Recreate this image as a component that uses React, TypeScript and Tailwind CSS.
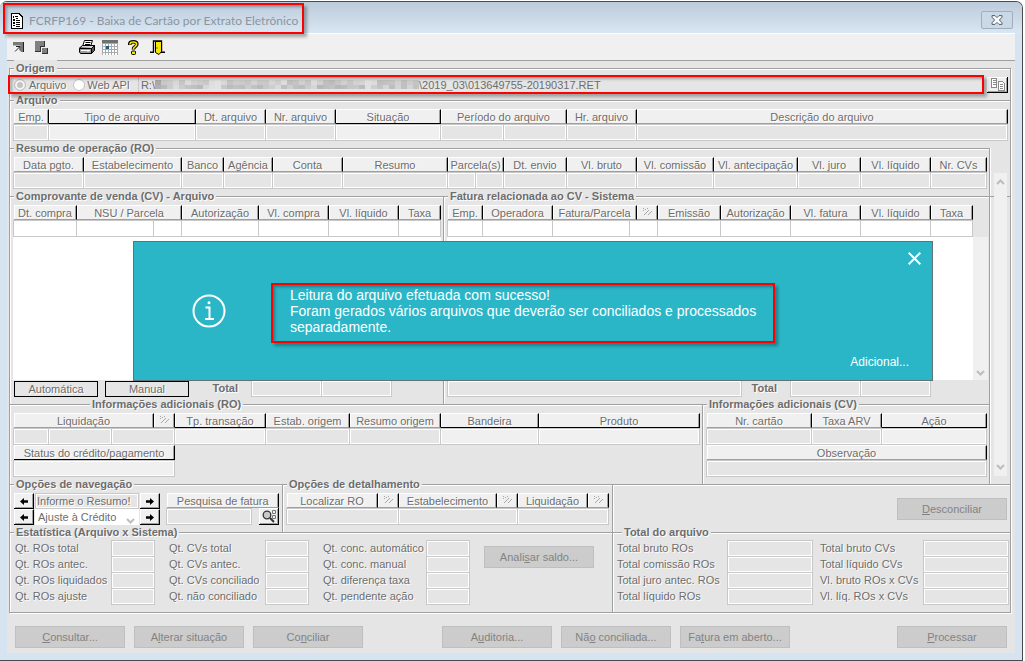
import React from 'react';
import clsx from 'clsx';

type HeadCell = string | { label: string; active?: boolean };

interface SectionTitleProps {
  children: React.ReactNode;
  lead?: string;
}

const embossed = '[text-shadow:1px_1px_0_#fff]';

const Line: React.FC<{ className?: string }> = ({ className }) => (
  <span className={clsx('mt-[2px] h-[2px] border-t border-[#a0a0a0] bg-white', className)} />
);

const SectionTitle: React.FC<SectionTitleProps> = ({ children, lead = 'w-[4px]' }) => (
  <div className="flex h-4 items-center">
    <Line className={lead} />
    <h2 className={clsx('px-[2px] text-[11px] leading-4 font-bold whitespace-nowrap', embossed)}>{children}</h2>
    <Line className="flex-1" />
  </div>
);

const FilterIcon = () => (
  <svg width="11" height="9" viewBox="0 0 11 9" className="mx-auto" shapeRendering="crispEdges">
    <path
      d="M1 0h1v1H1zM3 1h1v1H3zM5 0h1v1H5zM1 2h1v1H1zM6 2h1v1H6zM5 3h1v1H5zM4 4h1v1H4zM3 5h1v1H3zM2 6h1v1H2zM9 3h1v1H9zM8 4h1v1H8zM7 5h1v1H7zM6 6h1v1H6z"
      fill="#a8a8a8"
    />
  </svg>
);

const HeadRow: React.FC<{ cols: string; cells: HeadCell[] }> = ({ cols, cells }) => (
  <div className={clsx('grid h-4', cols)}>
    {cells.map((cell, i) => {
      const label = typeof cell === 'string' ? cell : cell.label;
      const active = typeof cell !== 'string' && cell.active;
      return (
        <button
          key={i}
          type="button"
          aria-label={label || 'Filtrar'}
          className={clsx(
            'mt-px h-[15px] min-w-0 overflow-hidden border-t border-r border-b border-t-white border-r-black bg-[#f0f0f0] text-center leading-[14px] whitespace-nowrap shadow-[inset_1px_0_0_#fff,inset_-1px_0_0_#a0a0a0]',
            active ? 'border-b-black' : 'border-b-[#a0a0a0]',
            embossed,
          )}
        >
          {label || <FilterIcon />}
        </button>
      );
    })}
  </div>
);

interface FieldProps {
  label: string;
  tone?: 'off' | 'on' | 'white';
  className?: string;
}

const Field: React.FC<FieldProps> = ({ label, tone = 'off', className }) => (
  <input
    readOnly
    aria-label={label}
    className={clsx(
      '-ml-px h-[17px] min-w-0 border border-[#c8c8c8] shadow-[inset_0_0_0_1px_#fff]',
      tone === 'off' && 'bg-[#e5e5e5]',
      tone === 'on' && 'bg-[#f0f0f0]',
      tone === 'white' && 'bg-white',
      className,
    )}
  />
);

const FieldRow: React.FC<{ cols: string; names: string[]; on?: number[]; tone?: 'off' | 'white' }> = ({
  cols,
  names,
  on = [],
  tone = 'off',
}) => (
  <div className={clsx('grid h-4', cols)}>
    {names.map((name, i) => (
      <Field key={i} label={name} tone={on.includes(i) ? 'on' : tone} />
    ))}
  </div>
);

const ActionButton: React.FC<{ text: [string, string, string] }> = ({ text }) => (
  <button type="button" className="h-[22px] w-[110px] border border-[#bfbfbf] bg-[#cccccc] text-[#838383]">
    {text[0]}
    <u className="underline-offset-1">{text[1]}</u>
    {text[2]}
  </button>
);

const ArrowButton: React.FC<{ dir: 'left' | 'right'; label: string }> = ({ dir, label }) => (
  <button
    type="button"
    aria-label={label}
    className="flex h-4 items-center justify-center border-t border-r border-b border-t-white border-r-black border-b-black bg-[#f0f0f0] shadow-[inset_1px_0_0_#fff,inset_-1px_-1px_0_#a0a0a0]"
  >
    <svg width="8" height="7" viewBox="0 0 8 7" className={dir === 'right' ? 'rotate-180' : ''}>
      <path d="M0 3.500L4 0v2.200h4v2.600H4V7z" fill="#000" />
    </svg>
  </button>
);

const StatRows: React.FC<{ cols: string; rows: string[] }> = ({ cols, rows }) => (
  <div className={clsx('grid auto-rows-[16px]', cols)}>
    {rows.map((row) => (
      <React.Fragment key={row}>
        <span className={clsx('leading-4 whitespace-nowrap', embossed)}>{row}</span>
        <Field label={row} className="ml-0 w-full" />
      </React.Fragment>
    ))}
  </div>
);

const Chevron: React.FC<{ up?: boolean }> = ({ up }) => (
  <svg width="9" height="6" viewBox="0 0 9 6" className={up ? 'rotate-180' : ''}>
    <path d="M1 1l3.500 3.500L8 1" fill="none" stroke="#bdbdbd" strokeWidth="2" />
  </svg>
);

// shades of the masked folder name, two rows of blocks
const maskTop = ['a8', 'c8', 'cc', 'd8', 'c6', 'dc', 'd0', 'cc', 'c8', 'de', 'e2', 'd8', 'c4', 'cc', 'ca', 'c6', 'd2', 'c8', 'c8', 'd6', 'ce', 'dd', 'c0', 'c4', 'd0', 'c6', 'dc', 'd0', 'c0', 'bc', 'c6', 'd0', 'c6', 'd2', 'd4', 'e0', 'dc', 'c0', 'c2', 'c4', 'd0', 'c0', 'cc', 'c4'];
const maskBottom = ['b0', 'ba', 'cc', 'dc', 'cc', 'c4', 'c0', 'ba', 'd8', 'e0', 'e2', 'c8', 'bc', 'c2', 'be', 'cc', 'c2', 'ba', 'c8', 'ce', 'da', 'c0', 'ce', 'c0', 'bc', 'cc', 'd6', 'b8', 'be', 'c2', 'b8', 'bc', 'c6', 'c8', 'bc', 'e0', 'ce', 'c4', 'd6', 'be', 'd4', 'c0', 'd4', 'c2'];

const MaskedText = () => (
  <svg width="264" height="10" viewBox="0 0 264 10" shapeRendering="crispEdges" aria-hidden="true">
    {maskTop.map((c, i) => (
      <rect key={i} x={i * 6} y="0" width="6" height="5" fill={`#${c}${c}${c}`} />
    ))}
    {maskBottom.map((c, i) => (
      <rect key={i} x={i * 6} y="5" width="6" height="4" fill={`#${c}${c}${c}`} />
    ))}
  </svg>
);

const Highlight: React.FC<{ className: string }> = ({ className }) => (
  <div
    className={clsx(
      'pointer-events-none absolute z-20 border-2 border-[#fe0000] shadow-[3px_3px_3px_rgba(0,0,0,0.3),inset_2px_2px_3px_rgba(0,0,0,0.3)]',
      className,
    )}
  />
);

const TitleBar = () => (
  <header className="relative flex h-[31px] items-center justify-between rounded-t-[6px] bg-linear-to-b from-[#bccbdb] to-[#d9e6f3] pr-[9px] pl-[10px]">
    <div className="flex items-center gap-[6px] pt-[6px]">
      <svg width="13" height="16" viewBox="0 0 13 16" shapeRendering="crispEdges">
        <path d="M1 .5h8l3.500 3.500v11.500H1z" fill="#fff" stroke="#000" />
        <path d="M3 3h1v2H3zM3 6h2v2H3zM3 9h2v2H3zM3 12h2v1H3zM5 3h3v1H5zM6 5h2v1H6zM6 7h4v1H6zM6 9h4v1H6zM6 11h4v1H6zM6 13h4v1H6z" fill="#000" />
      </svg>
      <h1 className="font-[Lato,'Noto_Sans',sans-serif] text-[12px] leading-4 text-[#8c959f]">
        FCRFP169 - Baixa de Cartão por Extrato Eletrônico
      </h1>
    </div>
    <button
      type="button"
      aria-label="Fechar"
      className="mt-[5px] flex h-[18px] w-8 items-center justify-center rounded-[2px] border border-[#9fadbe] bg-[#cbd9e7]"
    >
      <svg width="12" height="10" viewBox="0 0 12 10">
        <path d="M1 .6h3L6 2.600l2-2h3v1.600L8.400 5 11 7.800v1.600H8l-2-2-2 2H1V7.800L3.600 5 1 2.200z" fill="#f6f8fa" stroke="#55606c" strokeWidth="1" />
      </svg>
    </button>
    <Highlight className="top-px left-[3px] h-[31px] w-[301px]" />
  </header>
);

const toolButton = 'flex h-4 w-4 items-center justify-center';

const Toolbar = () => (
  <nav className="flex h-7 items-center border-t border-b border-t-white border-b-[#a0a0a0] bg-[#f0f0f0] pl-[4px]">
    <button type="button" aria-label="Minimizar" className={toolButton}>
      <svg width="12" height="12" viewBox="0 0 12 12">
        <path d="M0 1h11v10H8L0 4z" fill="#7a7a7a" />
        <path d="M10.500 1v10" stroke="#222" />
        <path d="M1 4.500h6.500V11H1z" fill="#f4f4f4" />
        <path d="M3 5.500h4v4M7 5.500l-5 5" fill="none" stroke="#222" strokeWidth="1" />
      </svg>
    </button>
    <button type="button" aria-label="Janelas" className={clsx(toolButton, 'ml-[6px]')}>
      <svg width="15" height="13" viewBox="0 0 15 13" shapeRendering="crispEdges">
        <path d="M1 0h10v6H7v5H1z" fill="#808080" />
        <path d="M10 0h1v6H7v5H1v-1h5V5h4z" fill="#333" />
        <path d="M8 7h6v6H8z" fill="#808080" />
        <path d="M13 7h1v6H8v-1h5z" fill="#333" />
      </svg>
    </button>
    <button type="button" aria-label="Imprimir" className={clsx(toolButton, 'ml-[30px]')}>
      <svg width="16" height="15" viewBox="0 0 16 15">
        <path d="M5.500 .5h8l-2 6h-8z" fill="#fff" stroke="#000" />
        <path d="M6.500 2.500h5M6 4.500h5" stroke="#000" />
        <path d="M.5 8l3-2.500h12l-3 3z" fill="#d8d8d8" stroke="#000" />
        <path d="M.5 8.500h12v5h-11l-1-1.500z" fill="#9a9a9a" stroke="#000" />
        <path d="M12.500 8.500l3-3v5l-3 3z" fill="#555" stroke="#000" />
        <path d="M2 10.500h9" stroke="#fff" />
        <path d="M8 11h2v1H8z" fill="#e8e000" />
      </svg>
    </button>
    <button type="button" aria-label="Calendário" className={clsx(toolButton, 'ml-[7px]')}>
      <svg width="16" height="15" viewBox="0 0 16 15" shapeRendering="crispEdges">
        <path d="M0 0h16v15H0z" fill="#a8a8a8" />
        <path d="M0 0h16v3H0z" fill="#707070" />
        {[4, 7, 10, 13].map((y) =>
          [1, 4, 7, 10, 13].map((x) => <rect key={`${x}-${y}`} x={x} y={y} width="2" height="2" fill="#fff" />),
        )}
        <rect x="4" y="6" width="3" height="3" fill="#15608f" />
      </svg>
    </button>
    <button type="button" aria-label="Ajuda" className={clsx(toolButton, 'ml-[7px]')}>
      <svg width="11" height="15" viewBox="0 0 11 15">
        <path d="M1.800 5V3.600Q2.200 1.800 5.400 1.800 8.800 1.800 8.800 4.200 8.800 5.600 7 6.800 5.400 7.800 5.400 9.600" fill="none" stroke="#000" strokeWidth="3.600" />
        <path d="M2 4.600V3.800Q2.400 2 5.400 2 8.600 2 8.600 4.200 8.600 5.400 7 6.600 5.400 7.600 5.400 9.200" fill="none" stroke="#f7e600" strokeWidth="1.700" />
        <rect x="3.500" y="11" width="4" height="3.500" rx="1" fill="#f7e600" stroke="#000" />
      </svg>
    </button>
    <button type="button" aria-label="Sair" className={clsx(toolButton, 'ml-[8px]')}>
      <svg width="15" height="15" viewBox="0 0 15 15">
        <path d="M3.500 12V1h8v11" fill="#fff" stroke="#000" strokeWidth="1.400" />
        <path d="M0 12.300h4M11 12.300h4" stroke="#000" strokeWidth="1.400" />
        <path d="M5.500 1.500h6v10l-2.500 3-3.500-2z" fill="#f7e600" stroke="#000" />
        <path d="M6.500 8h1" stroke="#000" />
      </svg>
    </button>
  </nav>
);

const OrigemRow = () => (
  <div className="relative -mb-[2px] flex h-[18px] items-center pr-[2px] pl-[4px]">
    <label className="flex items-center gap-[3px]">
      <input
        type="radio"
        name="origem"
        defaultChecked
        className="h-3 w-3 appearance-none rounded-full border border-[#c4c4c4] bg-[#c4c4c4] shadow-[inset_0_0_0_2px_#f4f4f4]"
      />
      <span className={embossed}>Arquivo</span>
    </label>
    <label className="ml-[7px] flex items-center gap-[2px]">
      <input type="radio" name="origem" className="h-3 w-3 appearance-none rounded-full border border-[#c4c4c4] bg-white" />
      <span className={embossed}>Web API</span>
    </label>
    <div className="ml-[8px] flex h-4 flex-1 items-center border-l border-[#c8c8c8] pl-[2px] text-[#6d6d6d]">
      <span>R:\</span>
      <MaskedText />
      <span>\2019_03\013649755-20190317.RET</span>
    </div>
    <button
      type="button"
      aria-label="Copiar"
      className="flex h-4 w-[21px] items-center justify-center border-r border-b border-black bg-[#f0f0f0] shadow-[inset_1px_1px_0_#fff,inset_-1px_-1px_0_#a0a0a0]"
    >
      <svg width="15" height="13" viewBox="0 0 15 13" shapeRendering="crispEdges" fill="#fff" stroke="#8a8a8a">
        <path d="M1.500 .5h5v9h-5zM8.500 3.500h4l2 2v7h-6z" />
        <path d="M3 2.500h3M3 4.500h3M3 6.500h3M10 6.500h3M10 8.500h3M10 10.500h3" />
      </svg>
    </button>
    <Highlight className="top-[-1px] -left-[2px] right-[26px] h-[19px]" />
  </div>
);

const Toast = () => (
  <div
    role="dialog"
    className="absolute top-[53px] right-[56px] left-[123px] z-10 flex h-[140px] items-center border border-[#5f7377] bg-[#2ab6c7] text-[12px] leading-4 text-white"
  >
    <svg width="36" height="36" viewBox="0 0 36 36" fill="none" stroke="#fff" strokeWidth="2" className="ml-[57px]">
      <circle cx="18" cy="18" r="15.500" />
      <path d="M14.500 14.500h4v11M14 26h9" />
      <circle cx="18" cy="9.800" r="1.500" fill="#fff" stroke="none" />
    </svg>
    <div className="relative mt-1 ml-[44px] h-[60px] w-[504px] pt-[4px] pl-[19px] text-[14px] leading-4">
      <p>Leitura do arquivo efetuada com sucesso!</p>
      <p>Foram gerados vários arquivos que deverão ser conciliados e processados separadamente.</p>
      <Highlight className="inset-0" />
    </div>
    <button type="button" aria-label="Fechar aviso" className="absolute top-[10px] right-[11px]">
      <svg width="13" height="13" viewBox="0 0 13 13" stroke="#fff" strokeWidth="2">
        <path d="M.7.7l11.600 11.600M12.300.7L.7 12.300" />
      </svg>
    </button>
    <a href="#adicional" className="absolute right-[23px] bottom-[10px]">
      Adicional...
    </a>
  </div>
);

const arquivoCols = 'grid-cols-[35fr_147fr_70fr_70fr_105fr_126fr_70fr_371fr]';
const arquivoFields = 'grid-cols-[35fr_147fr_70fr_70fr_105fr_63fr_63fr_70fr_371fr]';
const roCols = 'grid-cols-[70fr_98fr_42fr_49fr_70fr_105fr_56fr_63fr_70fr_77fr_84fr_63fr_70fr_56fr]';
const roFields = 'grid-cols-[70fr_98fr_42fr_49fr_70fr_105fr_28fr_28fr_63fr_70fr_77fr_84fr_63fr_70fr_56fr]';

const panel = 'mt-2 -mb-2 min-w-0 border-r border-[#a0a0a0] pb-2 shadow-[1px_0_0_#fff]';

const Vendas = () => (
  <div className="relative grid grid-cols-[434fr_545fr]">
    <section className={panel}>
      <div className="-mt-2">
        <SectionTitle>Comprovante de venda (CV) - Arquivo</SectionTitle>
      </div>
      <div className="pr-[2px] pl-[4px]">
        <HeadRow
          cols="grid-cols-[63fr_105fr_77fr_70fr_70fr_42fr]"
          cells={['Dt. compra', 'NSU / Parcela', 'Autorização', 'Vl. compra', 'Vl. líquido', 'Taxa']}
        />
        <FieldRow
          cols="grid-cols-[63fr_77fr_28fr_77fr_70fr_70fr_42fr]"
          names={['Dt. compra', 'NSU', 'Parcela', 'Autorização', 'Vl. compra', 'Vl. líquido', 'Taxa']}
          tone="white"
        />
        <div className="mt-px -ml-px h-[143px] bg-white" />
        <div className="grid h-4 grid-cols-[84fr_7fr_84fr_63fr_70fr_70fr_49fr]">
          <button type="button" className={clsx('mt-px h-4 border border-black leading-[14px]', embossed)}>
            Automática
          </button>
          <span />
          <button type="button" className={clsx('mt-px h-4 border border-black leading-[14px]', embossed)}>
            Manual
          </button>
          <span className={clsx('pr-[14px] text-right leading-4 font-bold', embossed)}>Total</span>
          <Field label="Total compra" />
          <Field label="Total líquido" />
        </div>
      </div>
    </section>
    <section className="min-w-0">
      <SectionTitle>Fatura relacionada ao CV - Sistema</SectionTitle>
      <div className="flex pl-[4px]">
        <div className="min-w-0 flex-1">
          <HeadRow
            cols="grid-cols-[35fr_70fr_84fr_21fr_63fr_70fr_70fr_70fr_42fr]"
            cells={['Emp.', 'Operadora', 'Fatura/Parcela', '', 'Emissão', 'Autorização', 'Vl. fatura', 'Vl. líquido', 'Taxa']}
          />
          <FieldRow
            cols="grid-cols-[35fr_70fr_77fr_28fr_63fr_70fr_70fr_70fr_42fr]"
            names={['Emp.', 'Operadora', 'Fatura', 'Parcela', 'Emissão', 'Autorização', 'Vl. fatura', 'Vl. líquido', 'Taxa']}
            tone="white"
          />
          <div className="mt-px -ml-px h-[143px] bg-white" />
        </div>
        <div className="flex w-4 flex-col pt-[33px] pr-px">
          <div className="flex flex-1 items-end justify-center bg-[#f0f0f0] pb-1">
            <Chevron />
          </div>
        </div>
      </div>
      <div className="grid h-4 grid-cols-[294fr_49fr_70fr_70fr_58fr] pl-[4px]">
        <Field label="Descrição da fatura" />
        <span className={clsx('pr-[14px] text-right leading-4 font-bold', embossed)}>Total</span>
        <Field label="Total fatura" />
        <Field label="Total líquido" />
      </div>
    </section>
    <Toast />
  </div>
);

const Informacoes = () => (
  <div className="grid grid-cols-[693fr_286fr]">
    <section className={panel}>
      <div className="-mt-2">
        <SectionTitle lead="w-[80px]">Informações adicionais (RO)</SectionTitle>
      </div>
      <div className="pr-[2px] pl-[4px]">
        <HeadRow
          cols="grid-cols-[140fr_21fr_91fr_84fr_91fr_98fr_161fr]"
          cells={[
            'Liquidação',
            '',
            { label: 'Tp. transação', active: true },
            'Estab. origem',
            'Resumo origem',
            { label: 'Bandeira', active: true },
            { label: 'Produto', active: true },
          ]}
        />
        <FieldRow
          cols="grid-cols-[35fr_63fr_63fr_91fr_84fr_91fr_98fr_161fr]"
          names={['Banco', 'Agência', 'Conta', 'Tp. transação', 'Estab. origem', 'Resumo origem', 'Bandeira', 'Produto']}
          on={[3, 6, 7]}
        />
        <div className="w-[161px]">
          <HeadRow cols="grid-cols-1" cells={[{ label: 'Status do crédito/pagamento', active: true }]} />
          <FieldRow cols="grid-cols-1" names={['Status do crédito/pagamento']} on={[0]} />
        </div>
      </div>
    </section>
    <section className="min-w-0">
      <SectionTitle>Informações adicionais (CV)</SectionTitle>
      <div className="pr-[2px] pl-[4px]">
        <HeadRow cols="grid-cols-[105fr_70fr_105fr]" cells={['Nr. cartão', 'Taxa ARV', { label: 'Ação', active: true }]} />
        <FieldRow cols="grid-cols-[105fr_70fr_105fr]" names={['Nr. cartão', 'Taxa ARV', 'Ação']} on={[2]} />
        <HeadRow cols="grid-cols-1" cells={['Observação']} />
        <FieldRow cols="grid-cols-1" names={['Observação']} />
      </div>
    </section>
  </div>
);

const Navegacao = () => (
  <section className={panel}>
    <div className="-mt-2">
      <SectionTitle>Opções de navegação</SectionTitle>
    </div>
    <div className="grid h-8 grid-cols-[147fr_112fr] items-start gap-x-[7px] pr-[3px] pl-[4px]">
      <div className="grid grid-cols-[20px_1fr_20px] gap-x-px pt-px">
        <ArrowButton dir="left" label="Resumo anterior" />
        <input
          aria-label="Resumo"
          defaultValue="Informe o Resumo!"
          className={clsx('h-4 min-w-0 border border-[#c8c8c8] bg-[#e5e5e5] pl-px shadow-[inset_0_0_0_1px_#fff]', embossed)}
        />
        <ArrowButton dir="right" label="Próximo resumo" />
        <ArrowButton dir="left" label="Ajuste anterior" />
        <div className="relative flex items-center">
          <select aria-label="Tipo de ajuste" className="h-4 w-full appearance-none bg-white pl-[3px] leading-4">
            <option>Ajuste à Crédito</option>
          </select>
          <span className="pointer-events-none absolute right-[4px] bottom-px">
            <Chevron />
          </span>
        </div>
        <ArrowButton dir="right" label="Próximo ajuste" />
      </div>
      <div>
        <HeadRow cols="grid-cols-1" cells={['Pesquisa de fatura']} />
        <div className="flex h-4 justify-between">
          <Field label="Pesquisa de fatura" className="w-[86px]" />
          <button
            type="button"
            aria-label="Pesquisar"
            className="flex h-[17px] w-[20px] items-center justify-center border-r border-b border-black bg-[#f0f0f0] shadow-[inset_1px_1px_0_#fff,inset_-1px_-1px_0_#a0a0a0]"
          >
            <svg width="14" height="13" viewBox="0 0 14 13" fill="none">
              <circle cx="5" cy="5" r="3.800" fill="#c9c9c9" stroke="#333" strokeWidth="1.300" />
              <path d="M8 8l4 4" stroke="#333" strokeWidth="2" />
              <path d="M10.500 .5h3v3h-3zM10.500 5.500h3v3h-3z" stroke="#777" />
            </svg>
          </button>
        </div>
      </div>
    </div>
  </section>
);

const Estatistica = () => (
  <div>
    <SectionTitle>Estatística (Arquivo x Sistema)</SectionTitle>
    <div className="flex items-start pl-[5px]">
      <StatRows cols="w-[140px] grid-cols-[1fr_44px]" rows={['Qt. ROs total', 'Qt. ROs antec.', 'Qt. ROs liquidados', 'Qt. ROs ajuste']} />
      <div className="ml-[14px]">
        <StatRows cols="w-[140px] grid-cols-[1fr_44px]" rows={['Qt. CVs total', 'Qt. CVs antec.', 'Qt. CVs conciliado', 'Qt. não conciliado']} />
      </div>
      <div className="ml-[14px]">
        <StatRows
          cols="w-[147px] grid-cols-[1fr_44px]"
          rows={['Qt. conc. automático', 'Qt. conc. manual', 'Qt. diferença taxa', 'Qt. pendente ação']}
        />
      </div>
      <div className="mt-[6px] ml-[14px]">
        <ActionButton text={['Anali', 's', 'ar saldo...']} />
      </div>
    </div>
  </div>
);

const App: React.FC = () => {
  return (
    <div className="bg-white pt-px pr-[2px] font-['Liberation_Sans',Arial,sans-serif] text-[11px] text-[#6d6d6d]">
      <div className="rounded-t-[7px] border-t border-r border-b border-[#4a4a50] bg-[#d6e4f2] pb-[7px]">
        <TitleBar />
        <main className="mx-[7px] bg-[#e5e5e5]">
          <Toolbar />
          <div className="mt-[7px] mr-[4px] ml-[2px] border border-[#a0a0a0] pb-2 shadow-[1px_1px_0_#fff,inset_1px_0_0_#fff]">
            <div className="-mt-[9px] [&_h2]:bg-[#e5e5e5]">
              <SectionTitle>Origem</SectionTitle>
            </div>
            <OrigemRow />

            <SectionTitle>Arquivo</SectionTitle>
            <div className="pr-[2px] pl-[4px]">
              <HeadRow
                cols={arquivoCols}
                cells={[
                  'Emp.',
                  { label: 'Tipo de arquivo', active: true },
                  'Dt. arquivo',
                  'Nr. arquivo',
                  { label: 'Situação', active: true },
                  'Período do arquivo',
                  'Hr. arquivo',
                  'Descrição do arquivo',
                ]}
              />
              <FieldRow
                cols={arquivoFields}
                names={['Emp.', 'Tipo', 'Dt. arquivo', 'Nr. arquivo', 'Situação', 'Período inicial', 'Período final', 'Hr. arquivo', 'Descrição']}
                on={[1, 4]}
              />
            </div>

            <div className="flex">
              <div className={clsx(panel, 'flex-1')}>
                <div className="-mt-2">
                  <SectionTitle>Resumo de operação (RO)</SectionTitle>
                </div>
                <div className="pr-[2px] pl-[4px]">
                  <HeadRow
                    cols={roCols}
                    cells={[
                      'Data pgto.',
                      'Estabelecimento',
                      'Banco',
                      'Agência',
                      'Conta',
                      'Resumo',
                      'Parcela(s)',
                      'Dt. envio',
                      'Vl. bruto',
                      'Vl. comissão',
                      'Vl. antecipação',
                      'Vl. juro',
                      'Vl. líquido',
                      'Nr. CVs',
                    ]}
                  />
                  <FieldRow
                    cols={roFields}
                    names={[
                      'Data pgto.',
                      'Estabelecimento',
                      'Banco',
                      'Agência',
                      'Conta',
                      'Resumo',
                      'Parcela',
                      'Parcelas',
                      'Dt. envio',
                      'Vl. bruto',
                      'Vl. comissão',
                      'Vl. antecipação',
                      'Vl. juro',
                      'Vl. líquido',
                      'Nr. CVs',
                    ]}
                  />
                </div>
                <Vendas />
                <Informacoes />
              </div>
              <div className="flex w-5">
                <div className="mt-[56px] w-1 self-start border-t border-[#a0a0a0]" />
                <div className="mt-[33px] flex flex-1 flex-col items-center justify-between bg-[#f0f0f0] py-[6px]">
                  <Chevron up />
                  <Chevron />
                </div>
                <div className="mt-[56px] w-[3px] self-start border-t border-[#a0a0a0]" />
              </div>
            </div>

            <div className="flex">
              <div className={clsx(panel, 'w-[603px]')}>
                <div className="-mt-2 grid grid-cols-[273fr_329fr]">
                  <Navegacao />
                  <section className="min-w-0">
                    <SectionTitle>Opções de detalhamento</SectionTitle>
                    <div className="pr-[3px] pl-[4px]">
                      <HeadRow
                        cols="grid-cols-[91fr_21fr_98fr_21fr_70fr_21fr]"
                        cells={['Localizar RO', '', 'Estabelecimento', '', 'Liquidação', '']}
                      />
                      <FieldRow cols="grid-cols-[112fr_119fr_91fr]" names={['Localizar RO', 'Estabelecimento', 'Liquidação']} />
                    </div>
                  </section>
                </div>
                <Estatistica />
              </div>
              <div className="min-w-0 flex-1">
                <div className="flex h-12 flex-col items-end pt-2">
                  <div className="h-[2px] w-full border-t border-[#a0a0a0] bg-white" />
                  <div className="mt-[12px] pr-[3px]">
                    <ActionButton text={['', 'D', 'esconciliar']} />
                  </div>
                </div>
                <SectionTitle lead="w-[9px]">Total do arquivo</SectionTitle>
                <div className="flex justify-between pr-px pl-[4px]">
                  <StatRows
                    cols="w-[196px] grid-cols-[1fr_86px]"
                    rows={['Total bruto ROs', 'Total comissão ROs', 'Total juro antec. ROs', 'Total líquido ROs']}
                  />
                  <StatRows
                    cols="w-[189px] grid-cols-[1fr_86px]"
                    rows={['Total bruto CVs', 'Total líquido CVs', 'Vl. bruto ROs x CVs', 'Vl. líq. ROs x CVs']}
                  />
                </div>
              </div>
            </div>
          </div>

          <footer className="flex justify-between pt-[13px] pr-[8px] pb-[5px] pl-[8px]">
            <div className="flex gap-[9px]">
              <ActionButton text={['', 'C', 'onsultar...']} />
              <ActionButton text={['A', 'l', 'terar situação']} />
              <ActionButton text={['Co', 'n', 'ciliar']} />
            </div>
            <div className="flex gap-[9px] pr-7">
              <ActionButton text={['A', 'u', 'ditoria...']} />
              <ActionButton text={['Nã', 'o', ' conciliada...']} />
              <ActionButton text={['Fa', 't', 'ura em aberto...']} />
            </div>
            <ActionButton text={['', 'P', 'rocessar']} />
          </footer>
        </main>
      </div>
    </div>
  );
};

export default App;
